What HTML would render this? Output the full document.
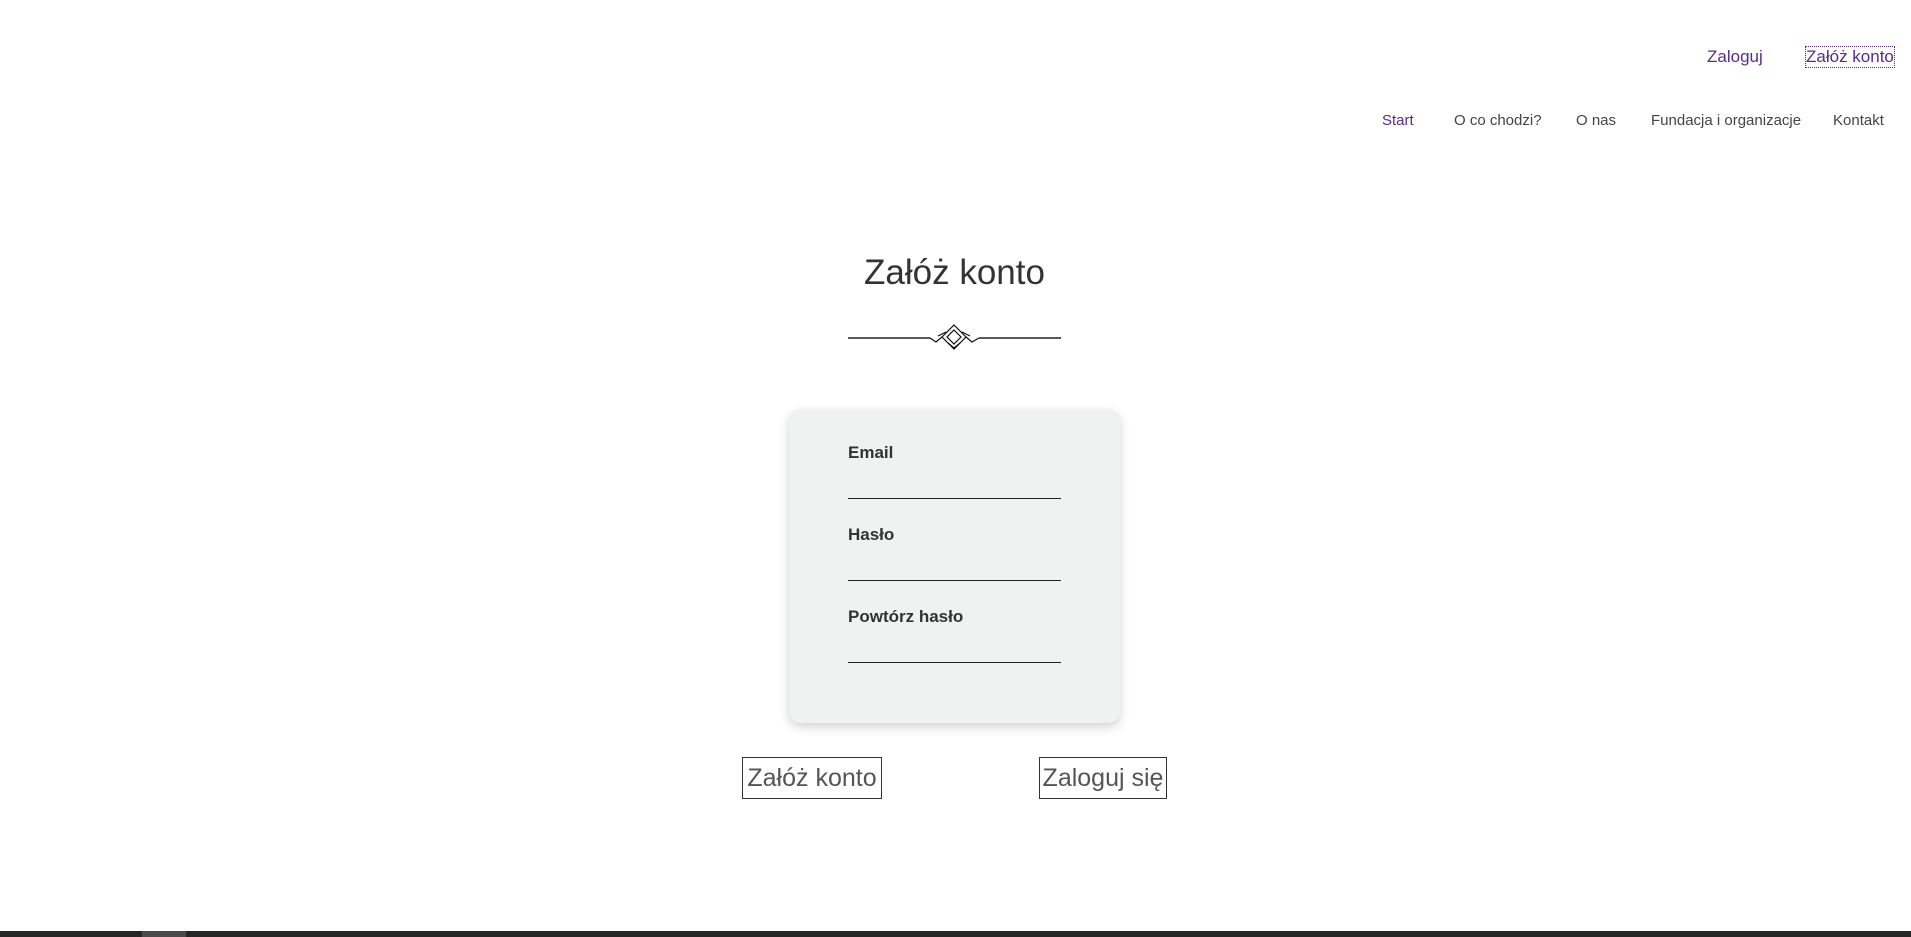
<!DOCTYPE html>
<html><head><meta charset="utf-8"><style>
body{margin:0;width:1911px;height:937px;background:#fff;font-family:"Liberation Sans",sans-serif;position:relative;overflow:hidden;color:#333}
.a{position:absolute;white-space:nowrap}
.top{font-size:17px;color:#5b2a86;top:47px}
.nav{font-size:15px;color:#444;top:112px}
.lbl{font-size:17px;font-weight:bold;color:#333;left:848px}
.ln{position:absolute;left:848px;width:213px;height:1px;background:#222}
.btn{position:absolute;border:1px solid #333;font-size:25px;font-weight:300;color:#555;text-align:center;line-height:40px;top:757px;height:40px}
</style></head><body>
<div class="a top" style="left:1707px">Zaloguj</div>
<div class="a top" style="left:1806px;outline:1px dotted #5b2a86">Załóż konto</div>
<div class="a nav" style="left:1382px;color:#5b2a86">Start</div>
<div class="a nav" style="left:1454px">O co chodzi?</div>
<div class="a nav" style="left:1576px">O nas</div>
<div class="a nav" style="left:1651px">Fundacja i organizacje</div>
<div class="a nav" style="left:1833px">Kontakt</div>
<div class="a" style="left:0;width:1911px;text-align:center;top:253px;font-size:35px;color:#333;margin-left:-1px">Załóż konto</div>
<svg class="a" style="left:848px;top:322px" width="213" height="30" viewBox="0 0 213 30">
<line x1="0" y1="16" x2="82" y2="16" stroke="#222" stroke-width="1.5"/>
<line x1="131" y1="16" x2="213" y2="16" stroke="#222" stroke-width="1.5"/>
<g fill="none" stroke="#111" stroke-width="1.2">
<path d="M106 3 L118 15 L106 27 L94 15 Z"/><path d="M106 8 L113 15 L106 22 L99 15 Z"/>
<path d="M94 15 L88 20 L82 16 M118 15 L124 20 L131 16"/><path d="M98 10 L90 14 M114 10 L122 14"/>
<path d="M100 21 L106 26 L112 21"/></g></svg>
<div class="a" style="left:789px;top:409px;width:331px;height:314px;background:#f0f1f1;border-radius:12px;box-shadow:0 4px 10px rgba(0,0,0,.18)"></div>
<div class="a lbl" style="top:443px">Email</div><div class="ln" style="top:498px"></div>
<div class="a lbl" style="top:525px">Hasło</div><div class="ln" style="top:580px"></div>
<div class="a lbl" style="top:607px">Powtórz hasło</div><div class="ln" style="top:662px"></div>
<div class="btn" style="left:742px;width:138px">Załóż konto</div>
<div class="btn" style="left:1039px;width:126px">Zaloguj się</div>
<div class="a" style="left:0;top:931px;width:1911px;height:6px;background:#262626"></div>
<div class="a" style="left:142px;top:931px;width:44px;height:6px;background:#4a4a4a"></div>
</body></html>
